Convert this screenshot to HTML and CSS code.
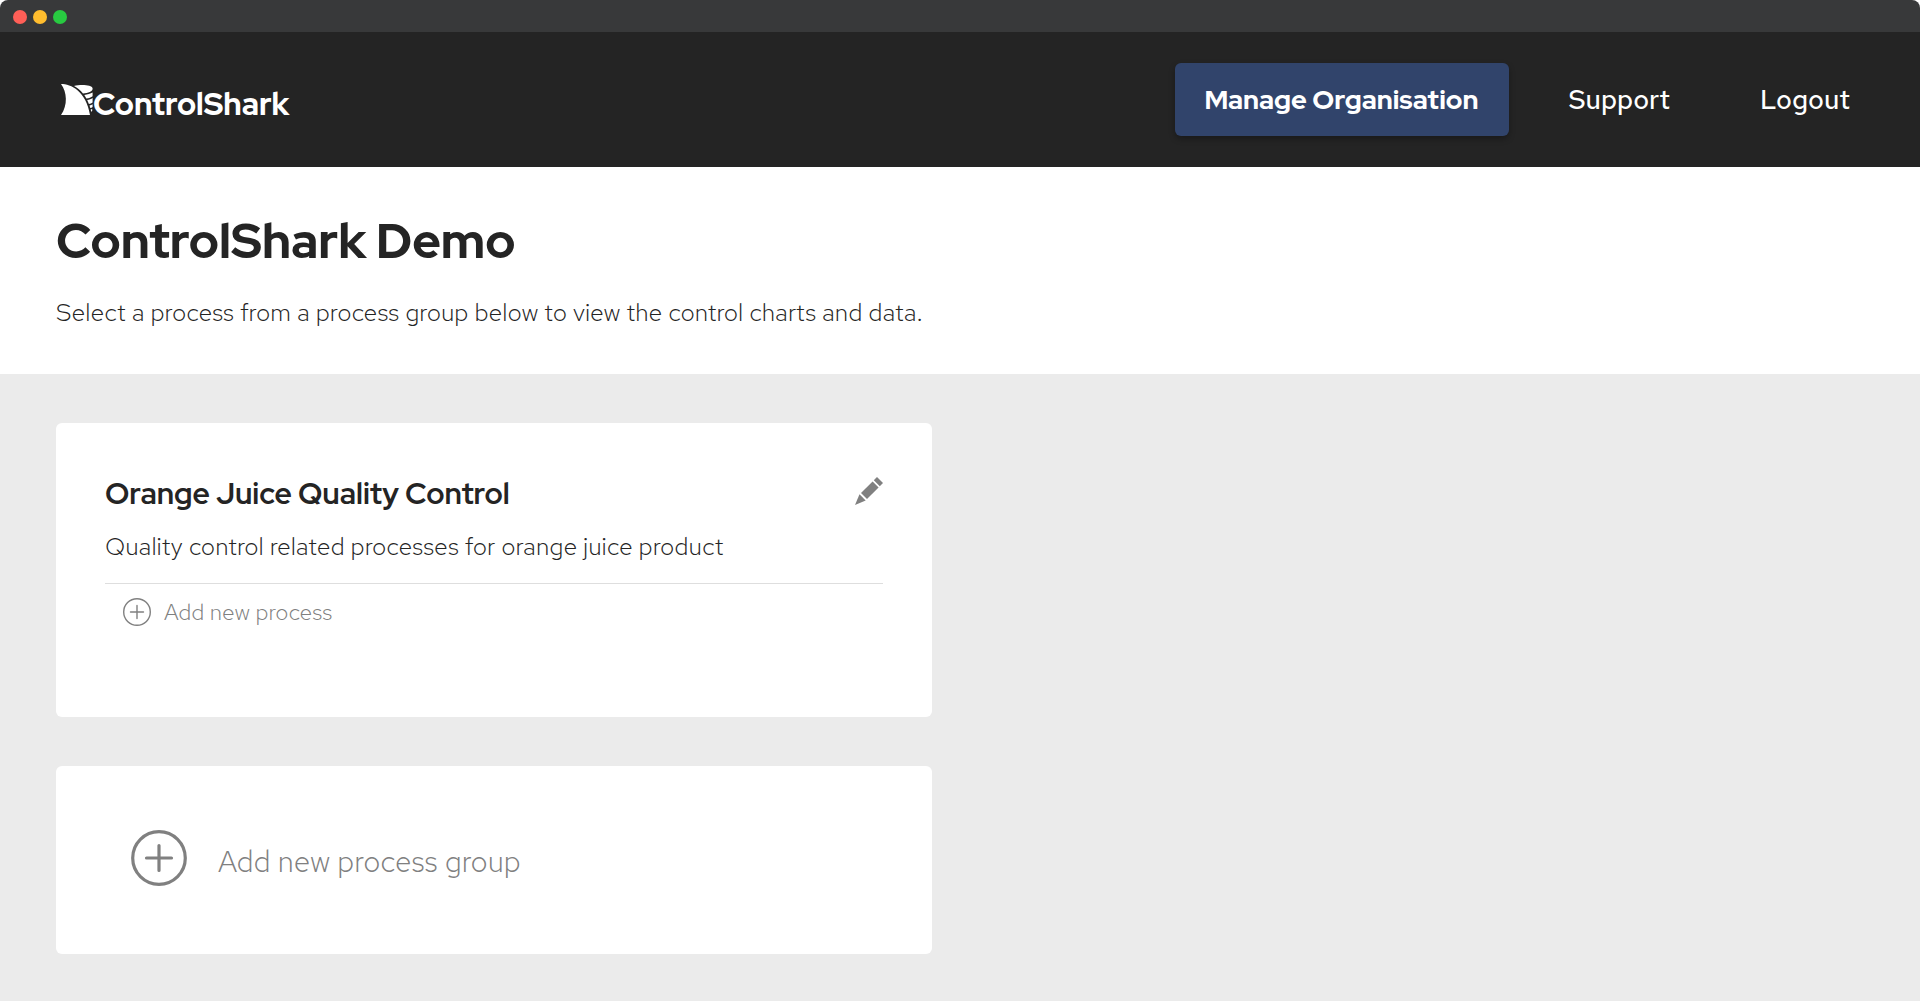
FILE: index.html
```html
<!DOCTYPE html>
<html lang="en">
<head>
  <meta charset="utf-8">
  <meta name="viewport" content="width=device-width, initial-scale=1">
  <title>ControlShark Demo</title>
  <link rel="stylesheet" href="styles.css">
</head>
<body>
  <div class="window">
    <div class="titlebar">
      <span class="dot dot-close"></span>
      <span class="dot dot-minimise"></span>
      <span class="dot dot-expand"></span>
    </div>

    <header class="site-header">
      <a class="logo" href="#">
        <svg class="logo-fin" viewBox="0 0 32 31" aria-hidden="true">
          <path d="M0 0C10 0 25 7 29 31H0C7 21 6 8 0 0Z"/>
          <path d="M13 2C19 .2 31 .6 31.6 4.2C32 7.4 27 9.2 22 9.4C19.500 6.500 16.500 3.800 13 2Z"/>
          <path d="M23.300 11C26.500 10.700 29.500 9.800 31.600 8.600V12.200C30 13.400 28 14.100 25.400 14.400Z"/>
          <path d="M26.200 16C28.300 15.700 30.200 15 31.600 14V18.500C30.500 19.300 29.300 19.700 27.900 19.900Z"/>
          <path d="M28.500 21.500C29.700 21.300 30.800 20.900 31.600 20.300V23C31 23.600 30.200 23.900 29.300 24.100Z"/>
          <path d="M29.700 25.500L31.200 24.900V26.500L30.200 28Z"/>
        </svg>
        <span class="logo-name">ControlShark</span>
      </a>
      <nav class="nav">
        <a class="nav-link nav-primary" href="#">Manage Organisation</a>
        <a class="nav-link" href="#">Support</a>
        <a class="nav-link" href="#">Logout</a>
      </nav>
    </header>

    <main class="main">
      <section class="intro">
        <h1 class="intro-title">ControlShark Demo</h1>
        <p class="text">Select a process from a process group below to view the control charts and data.</p>
      </section>

      <div class="groups">
        <section class="card">
          <div class="card-head">
            <h2 class="card-title">Orange Juice Quality Control</h2>
            <button class="edit" type="button" aria-label="Edit process group">
              <svg class="edit-icon" viewBox="0 0 28 28" aria-hidden="true">
                <path d="M22 0L28 6L24.800 9.200L18.800 3.200Z"/>
                <path d="M17.600 4.400L23.600 10.400L12 22L6 16Z"/>
                <path d="M4.500 17.200L10.700 23.400L0 28Z"/>
              </svg>
            </button>
          </div>
          <p class="text card-text">Quality control related processes for orange juice product</p>
          <button class="add-process" type="button">
            <svg class="plus-small" viewBox="0 0 28 28" aria-hidden="true">
              <circle cx="14" cy="14" r="13.300"/>
              <path d="M14 7.500V20.500M7.500 14H20.500"/>
            </svg>
            Add new process
          </button>
        </section>

        <button class="card add-group" type="button">
          <svg class="plus-large" viewBox="0 0 56 56" aria-hidden="true">
            <circle cx="28" cy="28" r="26.300"/>
            <path d="M28 15.500V40.500M15.500 28H40.500"/>
          </svg>
          <span class="add-group-label">Add new process group</span>
        </button>
      </div>
    </main>
  </div>
</body>
</html>
```
FILE: styles.css
```css
* {
  box-sizing: border-box;
}

body {
  margin: 0;
  background: #fff;
  color: #242424;
  font-family: "Red Hat Display", Inter, sans-serif;
}

h1, h2, p {
  margin: 0;
}

button {
  border: 0;
  color: #808080;
  font-family: "Red Hat Text", Lato, sans-serif;
  font-weight: 300;
  text-align: left;
  cursor: pointer;
}

.window {
  display: flex;
  flex-direction: column;
  min-height: 100vh;
  border-radius: 8px 8px 0 0;
  overflow: hidden;
}

.titlebar {
  display: flex;
  align-items: center;
  gap: 6px;
  height: 32px;
  padding: 2px 13px 0;
  background: #38393a;
}

.dot {
  width: 14px;
  height: 14px;
  border-radius: 50%;
}

.dot-close {
  background: #ff5f57;
}

.dot-minimise {
  background: #ffbd2e;
}

.dot-expand {
  background: #28ca41;
}

.site-header {
  display: flex;
  align-items: center;
  justify-content: space-between;
  padding: 31px 40px 31px 61px;
  background: #242424;
}

.logo {
  display: flex;
  align-items: baseline;
  color: #fff;
  text-decoration: none;
}

.logo-fin {
  width: 32px;
  height: 31px;
  fill: currentColor;
}

.logo-name {
  font-size: 31px;
  font-weight: 800;
  line-height: 22px;
}

.nav {
  display: flex;
  gap: 30px;
}

.nav-link {
  padding: 0 30px;
  color: #fff;
  font-family: "Red Hat Text", Inter, sans-serif;
  font-size: 27px;
  font-weight: 500;
  line-height: 73px;
  text-decoration: none;
}

.nav-primary {
  border-radius: 6px;
  background: #31446b;
  box-shadow: 0 3px 6px rgba(0, 0, 0, 0.3);
  font-family: inherit;
  font-weight: 800;
}

.main {
  display: flex;
  flex: 1;
  flex-direction: column;
}

.intro {
  padding: 44px 56px 45px;
  background: #fff;
}

.intro-title {
  margin-bottom: 26px;
  font-size: 49px;
  font-weight: 800;
  line-height: 60px;
}

.text {
  font-family: "Red Hat Text", Lato, sans-serif;
  font-size: 25px;
  font-weight: 300;
  line-height: 32px;
}

.groups {
  display: grid;
  flex: 1;
  grid-template-columns: calc(50% - 28px);
  align-content: start;
  gap: 49px;
  padding: 49px 56px 47px;
  background: #ebebeb;
}

.card {
  padding: 49px;
  border-radius: 6px;
  background: #fff;
}

.card-head {
  display: flex;
  align-items: flex-start;
  justify-content: space-between;
  margin-bottom: 17px;
}

.card-title {
  font-size: 30px;
  font-weight: 700;
  line-height: 42px;
}

.edit {
  padding: 5px 0;
  background: none;
}

.edit-icon {
  display: block;
  width: 28px;
  height: 28px;
  fill: #808080;
}

.card-text {
  padding-bottom: 20px;
  border-bottom: 1px solid #dedede;
}

.add-process {
  display: flex;
  align-items: center;
  gap: 13px;
  margin-bottom: 42px;
  padding: 14px 18px 0;
  background: none;
  font-size: 23px;
  line-height: 28px;
}

.plus-small,
.plus-large {
  fill: none;
  stroke: #808080;
  stroke-linecap: round;
}

.plus-small {
  width: 28px;
  height: 28px;
  stroke-width: 1.4;
}

.plus-large {
  width: 56px;
  height: 56px;
  stroke-width: 3.2;
}

.add-group {
  display: flex;
  align-items: center;
  gap: 31px;
  padding: 64px 75px 68px;
  font-size: 30px;
  line-height: 40px;
}

.add-group-label {
  padding-top: 6px;
}
```
